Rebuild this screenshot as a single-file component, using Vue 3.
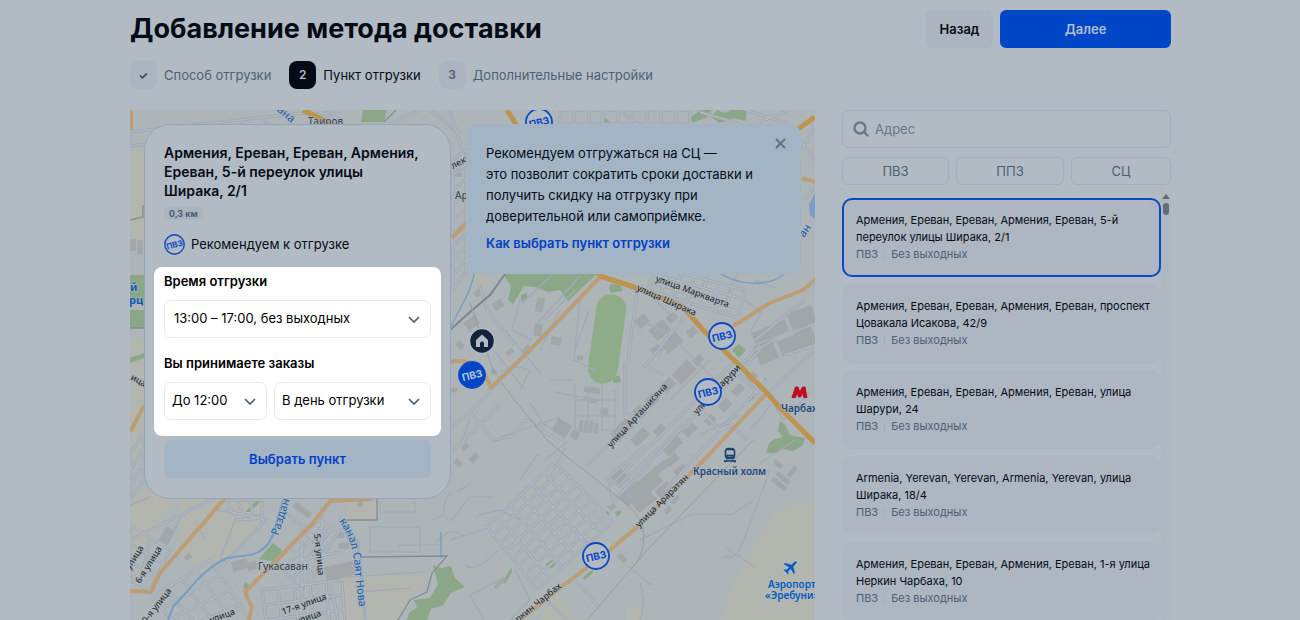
<script setup>
import { ref } from 'vue'

const steps = [
  { mark: '✓', label: 'Способ отгрузки', done: true },
  { mark: '2', label: 'Пункт отгрузки', active: true },
  { mark: '3', label: 'Дополнительные настройки' },
]
const kinds = ['ПВЗ', 'ППЗ', 'СЦ']
const points = [
  'Армения, Ереван, Ереван, Армения, Ереван, 5-й переулок улицы Ширака, 2/1',
  'Армения, Ереван, Ереван, Армения, Ереван, проспект Цовакала Исакова, 42/9',
  'Армения, Ереван, Ереван, Армения, Ереван, улица Шарури, 24',
  'Armenia, Yerevan, Yerevan, Armenia, Yerevan, улица Ширака, 18/4',
  'Армения, Ереван, Ереван, Армения, Ереван, 1-я улица Неркин Чарбаха, 10',
]
const selected = ref(0)
const query = ref('')

// Street grid between four corners: n lines one way, m the other
function grid(a, b, c, d, n, m) {
  const mix = (p, q, t) => [p[0] + (q[0] - p[0]) * t, p[1] + (q[1] - p[1]) * t].map(Math.round)
  let out = ''
  for (let i = 0; i <= n; i++) out += `M${mix(a, b, i / n)}L${mix(d, c, i / n)}`
  for (let i = 0; i <= m; i++) out += `M${mix(a, d, i / m)}L${mix(b, c, i / m)}`
  return out
}

const streets = [
  grid([487, 527], [555, 462], [613, 522], [537, 590], 6, 8),
  grid([130, 132], [330, 110], [340, 124], [130, 146], 9, 1),
  grid([655, 266], [745, 290], [738, 318], [648, 290], 7, 3),
  grid([560, 110], [690, 110], [690, 124], [560, 124], 9, 1),
  grid([130, 455], [144, 432], [144, 480], [130, 500], 1, 3),
  grid([130, 525], [170, 550], [150, 590], [130, 580], 2, 3),
  grid([152, 598], [210, 560], [250, 620], [190, 640], 4, 4),
  grid([262, 590], [342, 580], [345, 625], [268, 635], 5, 3),
  grid([275, 560], [318, 520], [340, 530], [300, 590], 3, 3),
  grid([225, 500], [262, 500], [262, 518], [238, 520], 3, 1),
  grid([453, 160], [466, 150], [466, 222], [453, 235], 1, 5),
  grid([453, 245], [466, 235], [466, 272], [453, 290], 1, 3),
  'M450 430L490 392M452 452L500 405M470 412l24 28l18-4l14-16l34 22M479 285l8 25M487 310L515 345',
  'M637 290L628 362M625 362V412L640 420M690 310L645 366L665 375M733 363L610 486M767 380L665 490M815 350L767 393M760 345L610 505M700 410l20 20l12-5l14 15M757 350l20-12',
  'M586 467L610 443M618 486L680 428M575 580L600 608M545 598l28 28M645 445L606 480M760 350L720 392M815 345L785 355M738 372l25 28M805 300l-50 40',
  'M343 120l-30-10M390 124l30-14M430 110l30 24M450 110l12 40M800 140l15 20M802 150l13-25M804 200l11-12M745 110l45 14M760 122l28-12M700 112l40 12M620 110l18 14',
  'M340 518L362 570M300 530l20 10M285 512l30 25M330 580l8 40M302 540V600M322 506V560M318 533L350 525M300 560L340 552M318 552l-5 30M130 540L215 498M215 508l50 12l-45 48',
]

const lanes =
  'M380 502V512H415V502M370 527H420V552H370ZM398 545H440M432 520l12-5M345 577l80-5M360 592l50-4M450 522l20-25h24M450 540l38-12M466 565q4 6 18-2l14-12M520 520l-20-10l-22 5M520 480l18-26M450 496l20-12M545 460l22-18M565 448l-22 42M612 500q-10-30 15-35M614 480l20 20M640 540l52-26h40l22-14M735 480l60-40M770 470l-30 80l-12 10M726 548l30 20M740 555l-18 2M640 582q6 20 0 38M628 566l24 20M500 580l-30 15l14 25M515 570l15 30l-20 20M660 446l30-20M520 300l-8 30l20 10M560 310l-20 40M580 300l-6 60l20 10M550 380h24M555 392l24 5M640 320l30 15l-12 24M745 300l16 12l-10 20M755 280l20 8M700 435l40-20M500 372q20-10 30 0M520 390l10-20M460 445l10-25M700 290l12-20M725 300l12-26M540 420l25 20M530 402l15 25M575 350l14-40M220 560l15-40l28-6M170 540l12-26M195 520l10 20M130 505l20-8M452 490q-14 18-4 30M462 535q-12-10-26 8M770 395l20 40M784 420l26-28M670 400l40-40M680 345l40 40M750 430l20-24M690 455l30 20M552 275l-30 28M580 276l-45 50M575 290l-30 30M575 385v45h40v-40M588 385v45M602 385v45M575 400h40M575 416h40M505 330l36 44M495 352l30 38M655 300l20 20M500 437l60-20'

const buildings = [
  [660, 330, 18, 14, -40], [642, 321, 12, 10, -40], [672, 318, 10, 8, -40], [672, 343, 20, 12, -40], [692, 332, 10, 8, -40],
  [656, 350, 10, 8, -40], [684, 372, 22, 14, -45], [668, 385, 14, 10, -45], [698, 360, 10, 7, -45], [652, 400, 12, 10, -45],
  [640, 412, 10, 12, -45], [622, 430, 22, 12, -45], [640, 437, 18, 10, -45], [672, 445, 20, 12, -45], [660, 430, 12, 8, -45],
  [690, 430, 14, 8, -45], [710, 420, 10, 8, -45], [725, 405, 12, 9, -45], [738, 390, 12, 8, -45], [752, 377, 10, 7, -45],
  [770, 332, 36, 12, -22], [802, 318, 26, 18, -22], [766, 352, 20, 20, -22], [790, 345, 22, 16, -22], [806, 338, 18, 18, -22],
  [632, 494, 24, 14, -40], [650, 482, 22, 16, -40], [643, 500, 22, 16, -40], [620, 478, 14, 14, -40], [660, 468, 16, 8, -40],
  [672, 460, 14, 8, -40], [664, 490, 16, 10, -40], [680, 470, 12, 6, -40], [675, 500, 10, 4, -45], [668, 510, 8, 5, -45],
  [472, 323, 14, 10, -35], [498, 305, 10, 8, -35], [478, 293, 8, 6, -35], [540, 305, 8, 14, 8], [538, 330, 8, 12, 8], [556, 341, 10, 8, 8],
  [527, 350, 10, 7, -45], [510, 352, 8, 5, -45], [580, 358, 6, 5, 0], [592, 390, 16, 6, 10], [590, 400, 14, 5, 10], [604, 412, 8, 8, 10],
  [581, 426, 4, 12, 8], [586, 427, 4, 12, 8], [591, 427, 4, 12, 8], [596, 428, 4, 10, 8], [562, 428, 16, 14, 30], [575, 435, 8, 8, 30],
  [474, 458, 10, 6, -45], [458, 463, 8, 6, 45], [465, 447, 8, 5, -45], [454, 390, 6, 5, 0],
  [340, 571, 30, 14, -12], [302, 510, 20, 6, 35], [240, 565, 16, 10, -15], [252, 566, 10, 8, -15], [167, 536, 10, 16, 30],
  [188, 557, 7, 5, -40], [302, 587, 6, 5, 0], [328, 597, 8, 5, 0], [340, 535, 8, 6, 0], [316, 541, 8, 6, 0], [344, 546, 10, 6, 0],
  [360, 504, 6, 6, 0], [783, 478, 16, 5, 40], [792, 472, 12, 5, -50], [778, 464, 10, 5, 40], [779, 484, 18, 5, 40],
  [500, 583, 14, 4, -45], [622, 558, 6, 10, -45], [612, 507, 8, 6, -30], [132, 245, 8, 12, 0], [140, 247, 5, 14, 0],
  [458, 175, 8, 4, 0], [460, 345, 8, 6, 45], [494, 372, 6, 5, 45],
]

const greens = [
  'M503 274H597L568 301L560 290L548 292L535 287L524 286L513 304L508 300L511 286Z',
  'M611 284l9 1l3 6l-12 2l-2-5Z', 'M521 295l6-2v5l-6 4Z', 'M613 378l6-3l2 7l-8 1Z',
  'M780 421l6 4l3 10l16 3l-2 7l-10 6l-10-2l-8 4l-9 0l3-10l6-4l8-2l-5-6Z',
  'M433 565l8 3l10-2l4 12l10 9l-14 6l-8 12l-12 4l-4 11h-20l2-7l8-6l-3-7l16-2l8-14Z',
  'M273 543l9 7l-5 12l-18-3Z', 'M245 512l12-12h5l-12 12Z', 'M245 582l6 5l-8 2Z',
  'M130 275h14v28h-14Z', 'M130 310h14v18h-14Z', 'M130 358l14-5v5l-14 5Z',
  'M363 110h24l-3 12h-23Z', 'M688 120l12-10h12l-6 8l-12 4Z', 'M717 110l8 3l6-3h16l-2 11l-10-3l-16 5l-8-6Z',
  'M503 580l9-13v5l-7 12Z', 'M546 564l6-4l4 4l-4 4l-6-1Z', 'M607 510l3 4l-4 2Z', 'M615 512l6-2v3l-4 4Z',
  'M583 577l10-8v4l-9 7Z', 'M732 350l7-6l7 6l-7 8Z', 'M748 398l6-3v3l-5 4Z', 'M763 379l3-2v3Z', 'M598 126l8-8l6 6Z',
]

const mainRoads = [
  'M507 110L517 126L560 200L600 276L637 288L667 300L683 307L703 330L737 363L767 393L780 408L815 443',
  'M303 110L332 124', 'M798 129L815 117',
]
const sideRoads = [
  'M600 277L537 343L491 388L484 372Q472 358 450 362', 'M733 326L770 303L803 290L815 280',
  'M767 393L717 446L697 467L637 527L610 550L560 588L520 620',
  'M130 591L151 592L160 573L180 550L226 497', 'M130 432L144 406',
  'M372 499L330 501L313 523L277 560L245 592L252 607L248 622', 'M452 238L467 223', 'M802 178L815 182', 'M131 110V130',
]

const labels = [
  [272, 107, 40, 'кана', 'water'], [308, 125, 0, 'Таиров', 'place'], [453, 169, -28, 'лект', 'road'], [455, 199, 0, 'Ар', 'place'],
  [130, 291, 0, 'й', 'blue'], [129, 304, 0, 'рц', 'blue'], [130, 379, 30, 'ица', 'road'],
  [655, 281, 20, 'улица Маркварта', 'road'], [636, 290, 24, 'улица Ширака', 'road'],
  [611, 448, -47, 'улица Арташисяна', 'road'], [697, 415, -47, 'улица Шарури', 'road'],
  [639, 528, -45, 'улица Араратян', 'road'], [509, 630, -39, 'Неркин Чарбах', 'road'],
  [278, 536, -72, 'Раздан', 'water'], [258, 570, 0, 'Гукасаван', 'place'], [314, 534, 84, '5-я улица', 'road'],
  [140, 584, -58, '6-я улица', 'road'], [130, 570, -58, 'улица', 'road'], [143, 628, -52, '10-я улица', 'road'],
  [283, 615, -20, '17-я улица', 'road'], [211, 623, -20, 'улица', 'road'], [290, 627, -20, 'я улица', 'road'],
  [804, 238, -55, 'ан', 'water'], [781, 412, 0, 'Чарбах', 'station'], [693, 475, 0, 'Красный холм', 'station'],
  [768, 588, 0, 'Аэропорт', 'air'], [765, 599, 0, '«Эребуни»', 'air'],
]
const pins = [[539, 122], [722, 336], [708, 392], [596, 556], [472, 375, true]]
</script>

<template>
  <div class="page">
    <header class="top">
      <h1>Добавление метода доставки</h1>
      <div class="actions">
        <button type="button" class="btn back">Назад</button>
        <button type="button" class="btn next">Далее</button>
      </div>
    </header>

    <ol class="steps">
      <li v-for="s in steps" :key="s.label" :class="{ active: s.active }">
        <span class="mark">
          <svg v-if="s.done" width="11" height="11" viewBox="0 0 11 11"><path d="M2 5.5l2.4 2.4L9 3.4" /></svg>
          <template v-else>{{ s.mark }}</template>
        </span>
        <span>{{ s.label }}</span>
      </li>
    </ol>

    <main class="content">
      <section class="map" aria-label="Карта">
        <svg class="canvas" viewBox="130 110 685 510" preserveAspectRatio="xMinYMin slice">
          <rect x="130" y="110" width="685" height="510" fill="#adb5b9" />
          <g fill="#b3b5af">
            <path d="M130 150h14v90h-14ZM130 340h14v110l-14 20ZM180 498h88l-12 40l-50 32l-26-15ZM345 500h32v20h-30ZM345 572l82 5l-20 28l-10 15h-55l-2-35ZM130 490l50 5l-40 60l-10-5Z" />
            <path d="M815 500l-40 10l-35 60l-20 50h95ZM473 274h22l-18 25ZM555 592l24 28h-40ZM626 608h15v12h-15Z" />
          </g>
          <path v-for="(g, i) in greens" :key="'g' + i" :d="g" fill="#8ba787" />
          <rect x="592" y="294" width="30" height="90" rx="15" fill="#8fac88" transform="rotate(8 607 339)" />
          <rect v-for="(b, i) in buildings" :key="'b' + i" :x="b[0] - b[2] / 2" :y="b[1] - b[3] / 2" :width="b[2]" :height="b[3]" :transform="`rotate(${b[4]} ${b[0]} ${b[1]})`" fill="#a1a6a9" />
          <path :d="lanes" class="lane" />
          <path v-for="(s, i) in streets" :key="'s' + i" :d="s" class="casing" />
          <path v-for="(s, i) in streets" :key="'t' + i" :d="s" class="street" />
          <g class="river">
            <path d="M283 500L273 535Q266 552 250 555L227 558Q215 563 200 577L173 607L168 620" stroke-width="2" />
            <path d="M475 270Q471 290 463 303L450 328M441 532v26M715 270Q735 285 760 283Q780 281 787 270" />
            <path d="M340 518L357 540L361 567L365 620" stroke-width="3" stroke="#9aadc2" />
          </g>
          <path d="M809 205l6-12v26l-5-4Z" fill="#7b9cc6" />
          <g class="edge">
            <path d="M377 498V520H343M362 557L447 556L432 573L427 592L410 600L398 620M130 220l13-3V205M130 328h14M384 122l12-12" />
            <path d="M450 330L470 312L490 295L505 274" stroke="#7d868c" stroke-width="2" />
          </g>
          <path class="rail" d="M470 303L493 370L513 398L547 440L567 457L593 477L630 507Q643 520 644 535Q644 558 630 570L587 620M753 440L683 513L650 547L630 570" />
          <path v-for="(r, i) in sideRoads" :key="'r' + i" :d="r" class="road" />
          <path v-for="(r, i) in mainRoads" :key="'m' + i" :d="r" class="road main" />

          <text v-for="(l, i) in labels" :key="'l' + i" :transform="`translate(${l[0]} ${l[1]}) rotate(${l[2]})`" :class="['label', l[4]]">{{ l[3] }}</text>
          <path id="canal" d="M339 521Q351 538 354 560Q356 590 362 625" fill="none" />
          <text class="label water"><textPath href="#canal">канал Саят Нова</textPath></text>

          <path d="M792 397.500L795.500 387H798L799.800 392L802.500 387H805L807 397.500H803.500L803 392.500L800.500 397H798.500L797 392.500L795.500 397.500Z" fill="#c00d27" stroke="#c00d27" stroke-linejoin="round" />
          <g fill="none" stroke="#1b4274" stroke-width="1.6">
            <rect x="725.500" y="448.500" width="9" height="10" rx="3" />
            <path d="M726 449.500h8M727.500 460l-3 2M732.500 460l3 2M724 461h12" />
            <rect x="727" y="455.500" width="6" height="2" />
          </g>
          <path transform="translate(791 567) rotate(45)" fill="#005bc4" d="M-1-7Q0-8 1-7L1.300-2L7 1.500V3L1.300 1.500L1 5L3 6.500V7.500L0 7L-3 7.500V6.500L-1 5L-1.300 1.500L-7 3V1.500L-1.300-2Z" />

          <g v-for="(p, i) in pins" :key="'p' + i" :transform="`translate(${p[0]} ${p[1]})`" :class="['pin', { solid: p[2] }]">
            <circle r="13" />
            <text text-anchor="middle" y="4" transform="rotate(-14)">ПВЗ</text>
          </g>
          <g transform="translate(482 341)">
            <circle r="12.500" fill="#12233c" stroke="#b2bbc3" stroke-width="1.500" />
            <path d="M-6-1L0-6.500L6-1V6H2V2.500Q2 .5 0 .5T-2 2.500V6H-6Z" fill="#b2bbc3" />
          </g>
        </svg>

        <article class="card">
          <h2>Армения, Ереван, Ереван, Армения, Ереван, 5-й переулок улицы Ширака, 2/1</h2>
          <span class="distance">0,3 км</span>
          <p class="advice">
            <svg width="21" height="21" viewBox="0 0 21 21">
              <circle cx="10.500" cy="10.500" r="9.700" />
              <text x="10.500" y="13.500" text-anchor="middle" transform="rotate(-14 10.500 10.500)">ПВЗ</text>
            </svg>
            Рекомендуем к отгрузке
          </p>
          <form class="schedule" @submit.prevent>
            <label for="time">Время отгрузки</label>
            <div class="pick wide">
              <select id="time"><option>13:00 – 17:00, без выходных</option></select>
              <svg width="12" height="8" viewBox="0 0 12 8"><path d="M1 1l5 5l5-5" /></svg>
            </div>
            <label for="until">Вы принимаете заказы</label>
            <div class="pair">
              <div class="pick">
                <select id="until"><option>До 12:00</option></select>
                <svg width="12" height="8" viewBox="0 0 12 8"><path d="M1 1l5 5l5-5" /></svg>
              </div>
              <div class="pick">
                <select aria-label="День приёма заказов"><option>В день отгрузки</option></select>
                <svg width="12" height="8" viewBox="0 0 12 8"><path d="M1 1l5 5l5-5" /></svg>
              </div>
            </div>
          </form>
          <button type="button" class="btn choose">Выбрать пункт</button>
        </article>

        <aside class="tip">
          <div>
            <p>Рекомендуем отгружаться на СЦ —<br />это позволит сократить сроки доставки и получить скидку на отгрузку при доверительной или самоприёмке.</p>
            <a href="#">Как выбрать пункт отгрузки</a>
          </div>
          <button type="button" class="close" aria-label="Закрыть">
            <svg width="11" height="11" viewBox="0 0 11 11"><path d="M1 1l9 9M10 1l-9 9" /></svg>
          </button>
        </aside>
      </section>

      <section class="side">
        <label class="search">
          <svg width="16" height="16" viewBox="0 0 16 16"><circle cx="7" cy="7" r="5.500" /><path d="M11 11l3.500 3.500" /></svg>
          <input v-model="query" type="text" placeholder="Адрес" aria-label="Адрес" />
        </label>
        <div class="kinds">
          <button v-for="k in kinds" :key="k" type="button">{{ k }}</button>
        </div>
        <div class="scroller">
          <ul class="list">
            <li v-for="(p, i) in points" :key="p">
              <button type="button" :class="['point', { selected: i === selected }]" @click="selected = i">
                <span class="address">{{ p }}</span>
                <span class="meta"><span>ПВЗ</span><i></i><span>Без выходных</span></span>
              </button>
            </li>
          </ul>
          <div class="bar"><span class="arrow"></span><span class="thumb"></span></div>
        </div>
      </section>
    </main>
  </div>
</template>

<style>
body {
  margin: 0;
  background: #b2bbc3;
}
</style>

<style scoped>
* {
  box-sizing: border-box;
}
.page {
  height: 100vh;
  overflow: hidden;
  display: flex;
  flex-direction: column;
  padding: 10px 129px 0 130px;
  font: 13px/18px Inter, 'Noto Sans', sans-serif;
  color: #050c16;
}
button,
input,
select {
  font: inherit;
  color: inherit;
}
h1,
h2,
p,
ol,
ul {
  margin: 0;
  padding: 0;
  list-style: none;
}
.top {
  display: flex;
  justify-content: space-between;
  align-items: center;
}
h1 {
  font-size: 27px;
  line-height: 36px;
  font-weight: 700;
}
.actions {
  display: flex;
  gap: 7px;
}
.btn {
  height: 38px;
  border: 0;
  border-radius: 6px;
  font-weight: 600;
}
.back {
  width: 67px;
  padding: 0;
  background: #abb4c0;
}
.next {
  width: 171px;
  background: #0047c8;
  color: #b2bfd0;
}
.steps {
  display: flex;
  gap: 18px;
  margin-top: 13px;
  color: #4c6075;
}
.steps li {
  display: flex;
  align-items: center;
  gap: 7px;
}
.steps .active {
  color: #050c16;
}
.mark {
  display: flex;
  align-items: center;
  justify-content: center;
  width: 27px;
  height: 28px;
  border-radius: 8px;
  background: #abb4c0;
  font-size: 12px;
  font-weight: 600;
}
.mark svg {
  fill: none;
  stroke: #34485e;
  stroke-width: 1.6;
}
.active .mark {
  background: #020b16;
  color: #b2bbc3;
}
.content {
  flex: 1;
  min-height: 0;
  display: grid;
  grid-template-columns: minmax(0, 1fr) 329px;
  gap: 27px;
  margin-top: 21px;
}
.map {
  position: relative;
  overflow: hidden;
  display: flex;
  align-items: flex-start;
  gap: 15px;
  padding: 14px;
}
.canvas {
  position: absolute;
  inset: 0;
  width: 100%;
  height: 100%;
}
.lane {
  fill: none;
  stroke: #a2abb5;
  stroke-width: 1.4;
}
.casing {
  fill: none;
  stroke: #9ba5b3;
  stroke-width: 3;
}
.street {
  fill: none;
  stroke: #b0b8be;
  stroke-width: 1.5;
}
.river {
  fill: none;
  stroke: #7a9cc0;
  stroke-width: 1.3;
}
.edge {
  fill: none;
  stroke: #858c92;
  stroke-width: 1.3;
}
.rail {
  fill: none;
  stroke: #979da2;
  stroke-width: 1;
}
.road {
  fill: none;
  stroke: #bb9d76;
  stroke-width: 4;
  stroke-linejoin: round;
}
.main {
  stroke: #bd944f;
  stroke-width: 5;
}
.label {
  font: 500 9px 'Noto Sans', sans-serif;
  fill: #2a3036;
  stroke: #b2bac0;
  stroke-width: 1px;
  paint-order: stroke;
}
.label.place {
  font-size: 10px;
  fill: #414b55;
}
.label.water {
  font-size: 11px;
  fill: #2a66a8;
}
.label.blue {
  font-weight: 700;
  font-size: 11px;
  fill: #0f5aaf;
}
.label.station {
  font-weight: 600;
  font-size: 10px;
  fill: #1f4677;
}
.label.air {
  font-weight: 600;
  font-size: 10px;
  fill: #0059bf;
}
.pin circle {
  fill: #b2bbc3;
  stroke: #0a48c4;
  stroke-width: 1.8;
}
.pin text,
.advice text {
  font: 700 10px Inter, sans-serif;
  fill: #0a48c4;
}
.pin.solid circle {
  fill: #0047c8;
}
.pin.solid text {
  fill: #b8c4d4;
}
.card {
  position: relative;
  width: 307px;
  flex: none;
  display: flex;
  flex-direction: column;
  align-items: flex-start;
  padding: 18px 9px 20px;
  border: 1px solid #94a5b5;
  border-radius: 26px;
  background: #b2bbc3;
}
.card h2 {
  padding: 0 20px 0 10px;
  font-size: 14px;
  line-height: 19px;
  font-weight: 600;
}
.distance {
  margin: 7px 10px 0;
  padding: 0 5px;
  border-radius: 5px;
  background: #a9b4c0;
  color: #43566b;
  font-size: 9px;
  line-height: 13px;
  font-weight: 600;
}
.advice {
  display: flex;
  align-items: center;
  gap: 6px;
  margin: 14px 10px 0;
  line-height: 21px;
}
.advice circle {
  fill: none;
  stroke: #0a48c4;
  stroke-width: 1.4;
}
.advice text {
  font-size: 8px;
}
.schedule {
  align-self: stretch;
  display: flex;
  flex-direction: column;
  margin-top: 12px;
  padding: 5px 10px 16px;
  border-radius: 8px;
  background: #fff;
  color: #000;
}
.schedule label {
  font-weight: 600;
}
.pair {
  display: grid;
  grid-template-columns: 103px 1fr;
  gap: 7px;
}
.pick {
  position: relative;
  margin-top: 10px;
}
.wide {
  margin-bottom: 16px;
}
.pick select {
  display: block;
  width: 100%;
  height: 38px;
  padding: 0 28px 2px 7px;
  border: 1px solid #e3eaf0;
  border-radius: 7px;
  background: #fff;
  appearance: none;
}
.wide select {
  padding-left: 9px;
}
.pick svg {
  position: absolute;
  right: 11px;
  top: 16px;
  pointer-events: none;
  fill: none;
  stroke: #4a6078;
  stroke-width: 1.7;
}
.choose {
  align-self: stretch;
  height: 38px;
  margin: 4px 10px 0;
  background: #a3b4c4;
  color: #0040c6;
}
.tip {
  position: relative;
  flex: 1;
  min-width: 0;
  display: flex;
  justify-content: space-between;
  align-items: flex-start;
  padding: 19px 15px 22px 20px;
  border-radius: 12px;
  background: #a3b4c4;
}
.tip p {
  line-height: 21px;
}
.tip a {
  display: block;
  margin-top: 7px;
  color: #0040c6;
  font-weight: 600;
  text-decoration: none;
}
.close {
  flex: none;
  display: flex;
  margin-top: -5px;
  padding: 0;
  border: 0;
  background: none;
}
.close svg {
  fill: none;
  stroke: #5f7488;
  stroke-width: 2;
}
.side {
  min-width: 0;
  min-height: 0;
  display: flex;
  flex-direction: column;
}
.search {
  display: flex;
  align-items: center;
  gap: 6px;
  height: 38px;
  padding: 0 10px;
  border: 1px solid #a3afbb;
  border-radius: 7px;
  flex: none;
}
.search svg {
  fill: none;
  stroke: #64788b;
  stroke-width: 2.4;
  stroke-linecap: round;
}
.search input {
  flex: 1;
  min-width: 0;
  padding: 0;
  border: 0;
  outline: 0;
  background: none;
}
.search input::placeholder {
  color: #64788b;
  opacity: 1;
}
.kinds {
  display: grid;
  grid-template-columns: 107fr 108fr 100fr;
  gap: 7px;
  margin-top: 9px;
}
.kinds button {
  height: 28px;
  padding: 0;
  border: 1px solid #a3afbb;
  border-radius: 6px;
  background: none;
  color: #4c6075;
}
.scroller {
  flex: 1;
  min-height: 0;
  overflow: hidden;
  display: flex;
  margin-top: 9px;
}
.list {
  flex: 1;
  min-width: 0;
  display: flex;
  flex-direction: column;
  gap: 7px;
  padding-top: 4px;
}
.point {
  display: block;
  width: 100%;
  height: 79px;
  padding: 0 4px 0 12px;
  border: 2px solid transparent;
  border-radius: 10px;
  background: #adb6c1;
  font-size: 11px;
  line-height: 17px;
  text-align: left;
}
.point.selected {
  border-color: #0a48c4;
}
.address {
  display: block;
}
.meta {
  display: flex;
  align-items: center;
  gap: 6px;
  color: #4c6075;
}
.meta i {
  width: 1px;
  height: 10px;
  background: #a0adba;
}
.bar {
  display: flex;
  flex-direction: column;
  align-items: center;
  width: 10px;
  background: #afb8c0;
}
.arrow {
  border: 4px solid transparent;
  border-top: 0;
  border-bottom: 5px solid #646d75;
}
.thumb {
  width: 6px;
  height: 12px;
  margin-top: 4px;
  border-radius: 3px;
  background: #646d75;
}
</style>
